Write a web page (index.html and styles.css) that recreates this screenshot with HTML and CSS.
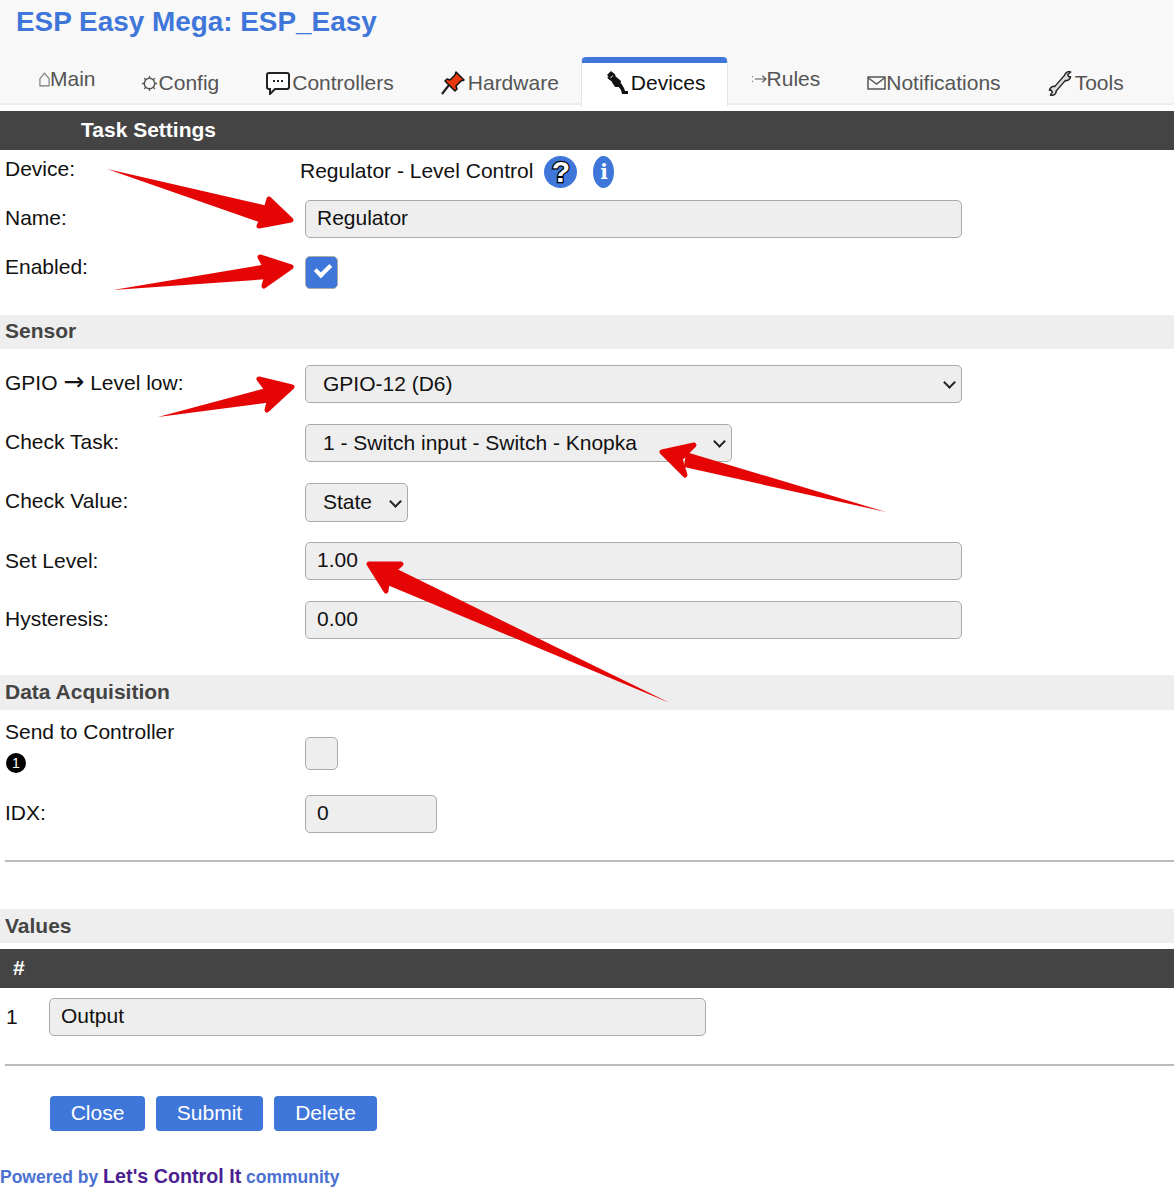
FILE: index.html
```html
<!DOCTYPE html>
<html lang="en">
<head>
    <meta charset="UTF-8">
    <title>ESP Easy Mega: ESP_Easy</title>
    <link rel="stylesheet" href="styles.css">
</head>
<body>
    <!-- Header and tabs -->
    <header>
        <h1>ESP Easy Mega: ESP_Easy</h1>
        <nav class="tabs">
            <a href="#" class="tab tab-plain">
                <svg class="ico ico-home" viewBox="0 0 12 16"><path d="M1 15V7l5-6 5 6v8z" fill="none" stroke="#777" stroke-width="1.2"/></svg>Main</a>
            <a href="#" class="tab">
                <svg class="ico ico-gear" viewBox="0 0 18 18"><circle cx="9" cy="9" r="5.5" fill="none" stroke="#555" stroke-width="1.5"/><path d="M9 1v3M9 14v3M1 9h3M14 9h3M3.3 3.3l2 2M12.7 12.7l2 2M3.3 14.7l2-2M12.7 5.300l2-2" stroke="#555" stroke-width="1.4"/></svg>Config</a>
            <a href="#" class="tab">
                <svg class="ico ico-chat" viewBox="0 0 26 24"><path d="M4 2h18a2 2 0 0 1 2 2v12a2 2 0 0 1-2 2H10l-5 5v-5H4a2 2 0 0 1-2-2V4a2 2 0 0 1 2-2z" fill="#fff" stroke="#222" stroke-width="2"/><path d="M8 10h2M12 10h2M16 10h2" stroke="#222" stroke-width="2"/></svg>Controllers</a>
            <a href="#" class="tab">
                <svg class="ico ico-pin" viewBox="0 0 24 24"><path d="M1 23l7-9" stroke="#222" stroke-width="2.200"/><path d="M15 1l8 8-3 1-5 5 1 3-2 2-10-10 2-2 3 1 5-5z" fill="#e8380d" stroke="#111" stroke-width="1.500" stroke-linejoin="round"/></svg>Hardware</a>
            <a href="#" class="tab tab-active">
                <svg class="ico ico-plug" viewBox="0 0 22 24"><path d="M1 4l4-4 3 3-4 4zM4 8l4-4 7 6-1 6-5 0z" fill="#111"/><path d="M6 2l3 3M2 6l3 3" stroke="#111" stroke-width="2"/><path d="M12 15l3-3 3 5 1 3h3v3h-6l-1-4z" fill="#111"/></svg>Devices</a>
            <a href="#" class="tab tab-plain">
                <svg class="ico ico-rules" viewBox="0 0 17 12"><path d="M1 3.500h1M1 8.500h1" stroke="#666" stroke-width="1.500"/><path d="M4 6h12M12 2.500l4 3.500-4 3.500" fill="none" stroke="#555" stroke-width="1.200"/></svg>Rules</a>
            <a href="#" class="tab">
                <svg class="ico ico-mail" viewBox="0 0 19 14"><rect x="1" y="1" width="17" height="12" fill="none" stroke="#555" stroke-width="1.500"/><path d="M1.500 2l8 6 8-6" fill="none" stroke="#555" stroke-width="1.500"/></svg>Notifications</a>
            <a href="#" class="tab">
                <svg class="ico ico-tool" viewBox="0 0 24 26"><path d="M6 20L19 5" stroke="#222" stroke-width="5.500"/><path d="M17 4a4.500 4.500 0 0 1 6-3l-3 3 1 2 2 0a5 5 0 0 1-6 4z" fill="#ddd" stroke="#222" stroke-width="1.500" stroke-linejoin="round"/><path d="M8 22a4.500 4.500 0 0 1-6 3l2-3-1-2-2 0a5 5 0 0 1 6-4z" fill="#ddd" stroke="#222" stroke-width="1.500" stroke-linejoin="round"/><path d="M6 20L19 5" stroke="#ddd" stroke-width="2.800"/></svg>Tools</a>
        </nav>
    </header>

    <main>
        <div class="bar bar-task">Task Settings</div>

        <div class="row row-device">
            <span class="label">Device:</span>
            <span class="device-name">Regulator - Level Control</span>
            <a href="#" class="help">?</a>
            <a href="#" class="info">i</a>
        </div>
        <div class="row row-name">
            <label class="label">Name:</label>
            <input type="text" class="field" value="Regulator">
        </div>
        <div class="row row-enabled">
            <label class="label label-up">Enabled:</label>
            <input type="checkbox" class="check" checked>
        </div>

        <h3 class="band band-sensor">Sensor</h3>
        <div class="row row-first">
            <label class="label">GPIO <span class="to">&rarr;</span> Level low:</label>
            <span class="select"><select class="field"><option>GPIO-12 (D6)</option></select></span>
        </div>
        <div class="row">
            <label class="label">Check Task:</label>
            <span class="select"><select class="field field-task"><option>1 - Switch input - Switch - Knopka</option></select></span>
        </div>
        <div class="row">
            <label class="label label-value">Check Value:</label>
            <span class="select"><select class="field field-state"><option>State</option></select></span>
        </div>
        <div class="row row-level">
            <label class="label label-level">Set Level:</label>
            <input type="text" class="field" value="1.00">
        </div>
        <div class="row">
            <label class="label">Hysteresis:</label>
            <input type="text" class="field" value="0.00">
        </div>

        <h3 class="band band-data">Data Acquisition</h3>
        <div class="row row-send">
            <div class="label">
                Send to Controller
                <span class="note">1</span>
            </div>
            <input type="checkbox" class="check check-send">
        </div>
        <div class="row row-idx">
            <label class="label">IDX:</label>
            <input type="text" class="field field-idx" value="0">
        </div>
        <hr class="rule rule-top">

        <h3 class="band band-values">Values</h3>
        <div class="bar bar-values">#</div>
        <div class="row row-output">
            <span class="num">1</span>
            <input type="text" class="field" value="Output">
        </div>
        <hr class="rule rule-bottom">

        <div class="buttons">
            <a href="#" class="btn btn-close">Close</a>
            <a href="#" class="btn btn-submit">Submit</a>
            <a href="#" class="btn btn-delete">Delete</a>
        </div>
    </main>

    <footer>
        Powered by <a href="#">Let's Control It</a> community
    </footer>

    <!-- Red annotation arrows drawn on top of the form -->
    <svg class="arrows" viewBox="0 0 1174 1200">
        <g fill="#e50505" stroke="#e50505" stroke-width="5" stroke-linejoin="round">
            <path stroke="none" d="M107 169L272 207L262 223z"/>
            <path d="M269 199L291 220L259 226L265 213z"/>
            <path stroke="none" d="M113 290L268 264L269 279z"/>
            <path d="M260 257L291 267L264 286L268 272z"/>
            <path stroke="none" d="M158 417L270 387L273 402z"/>
            <path d="M259 379L292 387L267 410L271 395z"/>
            <path stroke="none" d="M886 512L686 452L684 467z"/>
            <path d="M694 445L662 452L685 475L680 459z"/>
            <path stroke="none" d="M670 703L395 568L385 584z"/>
            <path d="M401 564L369 564L386 591L388 575z"/>
        </g>
    </svg>
</body>
</html>
```

FILE: styles.css
```css
body {
    font-family: "Liberation Sans", Arial, sans-serif;
    font-size: 21px;
    color: #111;
    background-color: #fff;
    margin: 0;
    position: relative;
    height: 1200px;
    overflow: hidden;
}

/* Header */
header {
    background-color: #f8f8f8;
    border-bottom: 2px solid #eee;
    height: 103px;
}

h1 {
    margin: 0;
    padding: 4px 0 0 16px;
    height: 57px;
    box-sizing: border-box;
    font-size: 27.9px;
    line-height: 36px;
    color: #3f76d9;
}

.tabs {
    display: flex;
    padding-left: 15px;
}

.tab {
    display: flex;
    align-items: center;
    height: 50px;
    box-sizing: border-box;
    padding: 0 21px 4px 24px;
    border-top: 6px solid transparent;
    border-radius: 4px 4px 0 0;
    color: #555;
    text-decoration: none;
}

.tab-plain {
    padding-bottom: 12px;
}

.tab-active {
    margin-left: 2px;
    background-color: #fff;
    color: #111;
    border-top-color: #3f76d9;
    box-shadow: 1px 0 0 #e4e4e4, -1px 0 0 #e4e4e4;
}

.ico {
    display: block;
    flex: none;
}

.ico-home { width: 11px; height: 15px; }
.ico-gear { width: 17px; height: 17px; margin-right: 1px; }
.ico-chat { width: 26px; height: 24px; margin-left: 1px; margin-right: 1px; }
.ico-pin { width: 24px; height: 24px; margin-left: 2px; margin-right: 3px; }
.ico-plug { width: 22px; height: 24px; margin-right: 3px; }
.ico-rules { width: 16px; height: 12px; }
.ico-mail { width: 19px; height: 14px; margin-left: 2px; }
.ico-tool { width: 24px; height: 25px; margin-left: 2px; margin-right: 3px; }

/* Section bars */
.bar {
    background-color: #444;
    color: #fff;
    font-weight: bold;
    height: 39px;
    line-height: 37px;
}

.bar-task {
    margin-top: 6px;
    padding-left: 81px;
}

.bar-values {
    margin-top: 6px;
    padding-left: 13px;
}

.band {
    margin: 0;
    height: 34px;
    line-height: 32px;
    padding-left: 5px;
    background-color: #eee;
    color: #444;
    font-size: 21px;
}

.band-sensor { margin-top: 26px; }
.band-data { margin-top: 36px; height: 35px; line-height: 33px; }
.band-values { margin-top: 47px; line-height: 34px; }

/* Form rows */
.row {
    display: flex;
    align-items: center;
    margin-top: 21px;
}

.label {
    flex: none;
    width: 305px;
    padding-left: 5px;
    box-sizing: border-box;
    margin-top: -2px;
}

.label-up { margin-top: -12px; }
.label-value { margin-top: -4px; }
.label-level { margin-top: 0; }

.to {
    font-family: "DejaVu Sans", sans-serif;
    font-size: 25px;
    line-height: 20px;
}

.row-device { margin-top: 6px; height: 31px; }
.row-device .label { width: 300px; margin-top: -6px; }
.row-name { margin-top: 13px; }
.row-enabled { margin-top: 18px; }
.row-first { margin-top: 16px; }
.row-level { margin-top: 20px; }
.row-send { margin-top: 12px; align-items: flex-start; }
.row-idx { margin-top: 22px; }
.row-output { margin-top: 10px; }

.num {
    width: 49px;
    padding-left: 6px;
    box-sizing: border-box;
}

.field {
    display: block;
    font: inherit;
    color: #111;
    width: 657px;
    height: 38px;
    box-sizing: border-box;
    margin: 0;
    padding: 0 11px 2px;
    background-color: #eee;
    border: 1px solid #aaa;
    border-radius: 5px;
}

/* Native arrow swapped for a thin chevron */
.select {
    display: block;
    position: relative;
}

.select::after {
    content: "";
    position: absolute;
    right: 8px;
    top: 50%;
    width: 7px;
    height: 7px;
    margin-top: -6px;
    border-right: 2px solid #222;
    border-bottom: 2px solid #222;
    transform: rotate(45deg);
    pointer-events: none;
}

select.field {
    appearance: none;
    padding: 0 8px 2px 17px;
}

.field-task { width: 427px; }
select.field-state { width: 103px; height: 39px; }
.field-idx { width: 132px; }

.check {
    appearance: none;
    width: 33px;
    height: 33px;
    margin: 0;
    position: relative;
    background-color: #eee;
    border: 1px solid #aaa;
    border-radius: 5px;
}

.check:checked {
    background-color: #3f76d9;
}

.check:checked::after {
    content: "";
    position: absolute;
    left: 9px;
    top: 7px;
    width: 12px;
    height: 6px;
    border-left: 4px solid #fff;
    border-bottom: 4px solid #fff;
    transform: rotate(-45deg);
}

.check-send {
    margin-top: 15px;
}

.device-name {
    margin: 0 11px 2px 0;
}

.help {
    width: 33px;
    height: 32px;
    line-height: 32px;
    margin-right: 16px;
    border-radius: 50%;
    background-color: #3f76d9;
    color: #fff;
    font-size: 30px;
    font-weight: bold;
    text-align: center;
    text-decoration: none;
    -webkit-text-stroke: 2.5px #000;
    paint-order: stroke fill;
}

.info {
    width: 21px;
    height: 32px;
    line-height: 32px;
    border-radius: 50%;
    background-color: #3f76d9;
    color: #fff;
    font-family: "DejaVu Serif", serif;
    font-size: 20px;
    font-weight: bold;
    text-align: center;
    text-decoration: none;
}

.note {
    display: block;
    width: 20px;
    height: 20px;
    line-height: 20px;
    margin: 9px 0 0 1px;
    border-radius: 50%;
    background-color: #000;
    color: #fff;
    font-size: 14px;
    text-align: center;
}

.rule {
    margin: 0 0 0 5px;
    border: none;
    border-top: 2px solid #bbb;
}

.rule-top { margin-top: 27px; }
.rule-bottom { margin-top: 28px; }

/* Buttons */
.buttons {
    display: flex;
    gap: 11px;
    margin-top: 30px;
    padding-left: 50px;
}

.btn {
    height: 35px;
    line-height: 34px;
    box-sizing: border-box;
    text-align: center;
    background-color: #3f76d9;
    color: #fff;
    text-decoration: none;
    border-radius: 4px;
}

.btn-close { width: 95px; }
.btn-submit { width: 107px; }
.btn-delete { width: 103px; }

/* Footer */
footer {
    margin-top: 32px;
    font-size: 17.5px;
    font-weight: bold;
    line-height: 26px;
    color: #4a70d2;
}

footer a {
    font-size: 19.7px;
    color: #4b1e91;
    text-decoration: none;
}

.arrows {
    position: absolute;
    left: 0;
    top: 0;
    width: 1174px;
    height: 1200px;
    pointer-events: none;
}
```
